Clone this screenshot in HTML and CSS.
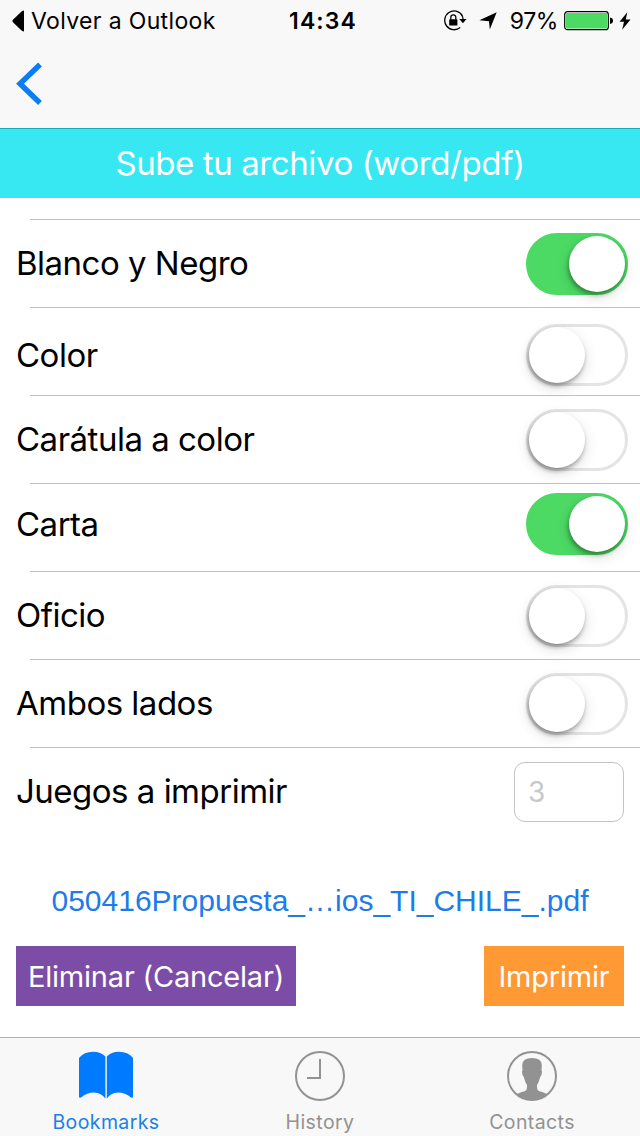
FILE: index.html
```html
<!DOCTYPE html>
<html lang="es">
<head>
<meta charset="utf-8">
<title>Imprimir</title>
<link rel="stylesheet" href="styles.css">
</head>
<body>
<div class="screen">
  <header class="top">
    <div class="status">
      <div class="status-back">
        <svg width="12" height="22" viewBox="0 0 12 22"><path d="M12 0.5V21.5Q10 21.5 8.5 19.5L1.2 12.6Q-.4 11 1.2 9.4L8.5 2.5Q10 .5 12 .5Z"/></svg>
        <span class="back-text">Volver a Outlook</span>
      </div>
      <span class="time">14:34</span>
      <div class="status-right">
        <svg width="24" height="22" viewBox="0 0 24 22">
          <path d="M19.2 5.5A9.4 9.4 0 1 0 17.2 17.5" fill="none" stroke="#000" stroke-width="1.3"/>
          <path d="M18.2 4.2Q20 6.500 20 9" fill="none" stroke="#000" stroke-width="1.3"/>
          <path d="M16.200 9H23.500L19.900 13.200Z"/>
          <rect x="6.200" y="9.300" width="8.200" height="6.300" rx=".6"/>
          <path d="M7.800 9.500V7.300a2.500 2.500 0 0 1 5 0V9.500" fill="none" stroke="#000" stroke-width="1.300"/>
        </svg>
        <svg class="arrow" width="18" height="18" viewBox="0 0 18 18"><path d="M17.700 .3L10.800 17.500L10 9.300L.4 8.300Z"/></svg>
        <span class="percent">97%</span>
        <svg width="49" height="20" viewBox="0 0 49 20">
          <rect x=".7" y=".7" width="43.600" height="18" rx="2.800" fill="#fff" stroke="#000" stroke-width="1.200"/>
          <rect x="2" y="2" width="41" height="15.400" rx="1" fill="#4cd964"/>
          <path d="M46 6.500Q49 7 49 9.700T46 13Z"/>
        </svg>
        <svg class="bolt" width="12" height="18" viewBox="0 0 12 18"><path d="M8.300 .2L.5 9.800H5L3.200 17.800L11.500 7.500H6.800Z"/></svg>
      </div>
    </div>
    <nav class="nav">
      <svg width="27" height="44" viewBox="0 0 27 44"><path d="M24 2.500L4 21.800L24 41" fill="none" stroke="#0a7df5" stroke-width="5.400"/></svg>
    </nav>
  </header>
  <div class="banner"><span>Sube tu archivo (word/pdf)</span></div>
  <main class="form">
    <div class="sep"></div>
    <div class="row"><span class="label">Blanco y Negro</span><span class="switch on"><i class="knob"></i></span></div>
    <div class="sep"></div>
    <div class="row low"><span class="label">Color</span><span class="switch"><i class="knob"></i></span></div>
    <div class="sep"></div>
    <div class="row"><span class="label">Carátula a color</span><span class="switch"><i class="knob"></i></span></div>
    <div class="sep"></div>
    <div class="row high"><span class="label">Carta</span><span class="switch on"><i class="knob"></i></span></div>
    <div class="sep"></div>
    <div class="row"><span class="label">Oficio</span><span class="switch"><i class="knob"></i></span></div>
    <div class="sep"></div>
    <div class="row"><span class="label">Ambos lados</span><span class="switch"><i class="knob"></i></span></div>
    <div class="sep"></div>
    <div class="row copies"><span class="label">Juegos a imprimir</span><span class="field">3</span></div>
    <div class="file"><span>050416Propuesta_…ios_TI_CHILE_.pdf</span></div>
    <div class="actions">
      <div class="btn cancel"><span>Eliminar (Cancelar)</span></div>
      <div class="btn print"><span>Imprimir</span></div>
    </div>
  </main>
  <footer class="tabs">
    <div class="tab active">
      <svg width="54" height="50" viewBox="0 0 54 50" fill="#007aff"><path d="M0 7Q5 .7 14 .7Q22 .7 26.400 5.500V47.500Q22 41.500 15 41.500Q8 41.500 2 46.500Q0 47.500 0 45.500Z"/><path d="M54 7Q49 .7 40 .7Q32 .7 27.800 5.500V47.500Q32 41.500 39 41.500Q46 41.500 52 46.500Q54 47.500 54 45.500Z"/></svg>
      <span>Bookmarks</span>
    </div>
    <div class="tab">
      <svg width="50" height="50" viewBox="0 0 50 50" fill="none" stroke="#929292" stroke-width="2"><circle cx="25" cy="25" r="24"/><path d="M25 8V27H12"/></svg>
      <span>History</span>
    </div>
    <div class="tab">
      <svg width="50" height="50" viewBox="0 0 50 50"><circle cx="25" cy="25" r="24" fill="none" stroke="#929292" stroke-width="2"/><path d="M10 43Q14 41 18 40Q20 39.300 20 36V34Q18 31 16.800 26Q15.300 25 15 21Q14.800 20 15.500 19.800L15.200 14Q15.500 7 25 7Q34.500 7 34.800 14L34.500 19.800Q35.200 20 35 21Q34.700 25 33.200 26Q32 31 30 34V36Q30 39.300 32 40Q36 41 40 43Q33 49 25 49Q17 49 10 43Z" fill="#929292"/></svg>
      <span>Contacts</span>
    </div>
  </footer>
</div>
</body>
</html>
```
FILE: styles.css
```css
* { box-sizing: border-box; }
body { margin: 0; background: #fff; font-family: Inter, "Liberation Sans", sans-serif; color: #000; }
svg { display: block; flex: none; }
span { white-space: nowrap; }
.screen { width: 640px; height: 1136px; display: flex; flex-direction: column; overflow: hidden; }
.top { height: 128px; background: #f8f8f8; }
.status { height: 40px; display: grid; grid-template-columns: 1fr auto 1fr; align-items: center; padding: 0 9px 0 12px; }
.status-back { display: flex; align-items: center; gap: 7px; }
.back-text { font-size: 23px; line-height: 40px; letter-spacing: 0.35px; }
.time { font-size: 23px; font-weight: 600; line-height: 42px; letter-spacing: 1.1px; padding-left: 3px; }
.status-right { display: flex; align-items: center; justify-content: flex-end; }
.arrow { margin: 0 13px 0 12px; }
.percent { font-size: 23px; line-height: 40px; letter-spacing: -0.4px; margin-right: 6px; }
.bolt { margin-left: 6px; }
.nav { padding: 22px 0 0 16px; }
.banner { height: 70px; background: #37e8f3; border-top: 1px solid #1ba9b4; color: #fff; text-align: center; font-size: 33px; line-height: 68px; letter-spacing: -0.4px; }
.form { height: 839px; padding-top: 21px; }
.sep { height: 1px; margin-left: 30px; background: #c2c2c5; }
.row { height: 87px; padding: 13px 12px 0 16px; display: flex; justify-content: space-between; align-items: flex-start; }
.low { padding-top: 16px; }
.high { padding-top: 9px; }
.label { font-size: 33px; line-height: 61px; letter-spacing: -0.5px; }
.low .label, .high .label { line-height: 63px; }
.switch { width: 102px; height: 62px; border-radius: 31px; border: 3px solid #e4e4e4; background: #fff; display: flex; }
.on { background: #4cd964; border-color: #4cd964; justify-content: flex-end; }
.knob { width: 56px; height: 56px; border-radius: 50%; background: #fff; box-shadow: -1px 3px 4px rgba(0,0,0,.32), 0 5px 14px rgba(0,0,0,.14); }
.copies { padding: 14px 16px 0 16px; }
.copies .label { line-height: 59px; }
.field { width: 110px; height: 60px; border: 1px solid #c4c4c8; border-radius: 11px; padding-left: 13px; font-size: 28px; line-height: 58px; color: #c7c7cd; }
.file { height: 60px; margin-top: 36px; text-align: center; font: 30px/60px "Liberation Sans", Arial, sans-serif; color: #1d7bea; }
.actions { display: flex; justify-content: space-between; padding: 15px 16px 0; }
.btn { height: 60px; line-height: 61px; text-align: center; font-size: 29px; letter-spacing: -0.2px; color: #fff; }
.cancel { width: 280px; background: #7b4da6; }
.print { width: 140px; background: #ff9933; }
.tabs { height: 99px; background: #f8f8f8; border-top: 1px solid #b2b2b2; display: grid; grid-template-columns: 212px 216px 208px; }
.tab { display: flex; flex-direction: column; align-items: center; padding-top: 13px; font-size: 19.5px; line-height: 24px; color: #929292; gap: 9px; letter-spacing: 0.4px; }
.active { color: #1a80e8; }
```
